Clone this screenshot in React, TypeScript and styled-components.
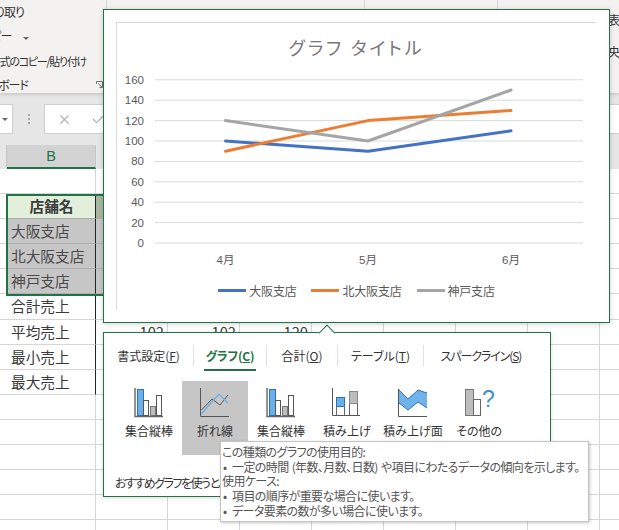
import React from 'react';
import styled, { createGlobalStyle } from 'styled-components';
import { X, Check } from 'lucide-react';

const GREEN = '#217346';
const JP = '"Noto Sans CJK JP", "Liberation Sans", sans-serif';

const GlobalStyle = createGlobalStyle`
  html, body {
    margin: 0;
    padding: 0;
    background: #fff;
  }
  body {
    font-family: ${JP};
    font-feature-settings: "palt";
    color: #444;
  }
`;

const Page = styled.div`
  position: relative;
  width: 619px;
  height: 530px;
  overflow: hidden;
  display: flex;
  flex-direction: column;
  background: #fff;
`;

/* ---- ribbon ---- */
const Ribbon = styled.div`
  height: 93px;
  flex: none;
  display: flex;
  background: #f3f2f1;
  box-shadow: 0 1px 4px rgba(0, 0, 0, 0.18);
  position: relative;
  z-index: 1;
`;

const ClipboardGroup = styled.div`
  position: relative;
  width: 106px;
  flex: none;
  border-right: 1px solid #d8d6d4;
  padding-top: 3px;
  overflow: hidden;
`;

const RibbonLine = styled.div<{ $indent: number; $tight?: boolean }>`
  height: 24.3px;
  line-height: 18px;
  font-size: ${(p) => (p.$tight ? 11 : 12)}px;
  letter-spacing: ${(p) => (p.$tight ? -1.3 : -1)}px;
  white-space: nowrap;
  color: #333;
  text-indent: ${(p) => p.$indent}px;
`;

const DropArrow = styled.span<{ $flush?: boolean }>`
  display: inline-block;
  width: 0;
  height: 0;
  margin-left: ${(p) => (p.$flush ? 0 : 12)}px;
  vertical-align: middle;
  border-left: 3px solid transparent;
  border-right: 3px solid transparent;
  border-top: 3px solid #666;
`;

const RibbonGroup = styled.div<{ $w: number }>`
  width: ${(p) => p.$w}px;
  flex: none;
  border-right: 1px solid #d8d6d4;
`;

const RibbonRest = styled.div`
  flex: 1;
  padding: 11px 0 0 110px;
  font-size: 12px;
  line-height: 18px;
  white-space: nowrap;
  overflow: hidden;
  color: #333;
  display: flex;
  flex-direction: column;
  gap: 14px;
`;

const Launcher = styled.svg`
  position: absolute;
  right: 3px;
  bottom: 5px;
`;

/* ---- formula bar ---- */
const FormulaBar = styled.div`
  height: 52px;
  flex: none;
  background: #e6e6e6;
  display: flex;
  align-items: flex-start;
  padding-top: 11px;
  box-sizing: border-box;
`;

const NameBox = styled.div`
  width: 13px;
  height: 30px;
  box-sizing: border-box;
  background: #fff;
  border: 1px solid #cfcfcf;
  border-left: none;
  display: flex;
  align-items: center;
  padding-left: 2px;
`;

const GripDots = styled.div`
  width: 2px;
  height: 10px;
  margin: 10px 14px 0 15px;
  background: repeating-linear-gradient(#a8a8a8 0 2px, transparent 2px 4px);
`;

const FormulaInput = styled.div`
  flex: 1;
  height: 30px;
  box-sizing: border-box;
  background: #fff;
  border: 1px solid #cfcfcf;
  border-right: none;
  display: flex;
  align-items: center;
  padding-left: 12px;
  gap: 19px;
  color: #b4b4b4;
`;

/* ---- sheet ---- */
const HeaderRow = styled.div`
  height: 24px;
  flex: none;
  display: grid;
  grid-template-columns: 7px 89px repeat(8, 72px);
  background: #e6e6e6;
`;

const ColHead = styled.div<{ $active?: boolean }>`
  box-sizing: border-box;
  border-right: 1px solid #c6c6c6;
  text-align: center;
  font: 14.5px/22px "Liberation Sans", sans-serif;
  color: ${GREEN};
  background: ${(p) => (p.$active ? '#d2d2d2' : 'transparent')};
  border-bottom: 2px solid ${(p) => (p.$active ? GREEN : '#e6e6e6')};
`;

const Sheet = styled.div`
  flex: 1;
  position: relative;
`;

const SheetRow = styled.div`
  height: 25.1px;
  display: grid;
  grid-template-columns: 7px 89px repeat(8, 72px);
`;

type Tone = 'head' | 'sel' | 'headSide';

const TONE_BG: Record<Tone, string> = {
  head: '#e2efda',
  sel: '#c6c6c6',
  headSide: '#a9b5a3',
};

const Cell = styled.div<{ $tone?: Tone; $edge?: boolean; $num?: boolean }>`
  box-sizing: border-box;
  border-right: 1px solid ${(p) => (p.$edge ? '#222' : p.$tone ? '#b0b0b0' : '#d6d6d6')};
  border-bottom: 1px solid ${(p) => (p.$tone ? '#afafaf' : '#d6d6d6')};
  background: ${(p) => (p.$tone ? TONE_BG[p.$tone] : '#fff')};
  font-size: 14.67px;
  line-height: 24px;
  padding: 0 3px 0 4px;
  color: ${(p) => (p.$tone === 'sel' ? '#4a4a4a' : '#3a3a3a')};
  font-weight: ${(p) => (p.$tone === 'head' ? 700 : 400)};
  text-align: ${(p) => (p.$tone === 'head' ? 'center' : p.$num ? 'right' : 'left')};
  font-feature-settings: normal;
  white-space: nowrap;
  overflow: hidden;
`;

const SelectionBox = styled.div`
  position: absolute;
  left: 6px;
  top: 25px;
  width: 110px;
  height: 102px;
  box-sizing: border-box;
  border: 2px solid ${GREEN};
`;

/* ---- chart popup ---- */
const ChartPopup = styled.div`
  position: absolute;
  left: 103px;
  top: 9px;
  width: 507px;
  height: 314px;
  box-sizing: border-box;
  background: #fff;
  border: 1px solid ${GREEN};
  box-shadow: 0 1px 5px rgba(0, 0, 0, 0.18);
  padding: 12px;
  z-index: 2;
`;

const ChartFrame = styled.div`
  width: 480px;
  height: 288px;
  box-sizing: border-box;
  border-top: 1px solid #d9d9d9;
  border-left: 1px solid #d9d9d9;
  display: flex;
  flex-direction: column;
`;

const ChartTitle = styled.div`
  margin-top: 13px;
  height: 22px;
  line-height: 22px;
  font-size: 18px;
  letter-spacing: 2.8px;
  text-align: center;
  color: #777;
`;

const Plot = styled.svg`
  display: block;
  margin-top: 12px;
  font-family: "Liberation Sans", ${JP};
  font-size: 11.5px;
  fill: #595959;
`;

const Legend = styled.div`
  margin-top: 10px;
  height: 20px;
  display: flex;
  justify-content: center;
  align-items: center;
  gap: 15px;
  font-size: 12px;
  letter-spacing: -0.2px;
  color: #595959;
`;

const LegendItem = styled.div`
  display: flex;
  align-items: center;
  gap: 3px;
`;

const LegendSwatch = styled.span<{ $color: string }>`
  width: 28px;
  height: 3px;
  background: ${(p) => p.$color};
`;

/* ---- quick analysis panel ---- */
const Panel = styled.div`
  position: absolute;
  left: 103px;
  top: 332px;
  width: 448px;
  height: 165px;
  box-sizing: border-box;
  background: #fff;
  border: 1px solid ${GREEN};
  box-shadow: 0 1px 4px rgba(0, 0, 0, 0.15);
  z-index: 2;
`;

const Notch = styled.div`
  position: absolute;
  left: 217px;
  top: -6px;
  width: 11px;
  height: 11px;
  background: #fff;
  border-top: 1px solid ${GREEN};
  border-left: 1px solid ${GREEN};
  transform: rotate(45deg);
`;

const TabStrip = styled.div`
  margin-top: 12px;
  height: 36px;
  display: grid;
  grid-template-columns: 90px 73px 71px 86px 114px;
  align-items: start;
`;

const Tab = styled.div<{ $last?: boolean }>`
  height: 21px;
  box-sizing: border-box;
  padding-top: 1px;
  line-height: 19px;
  font-size: 12px;
  letter-spacing: ${(p) => (p.$last ? '-1.1px' : '0')};
  text-align: center;
  color: #333;
  border-right: ${(p) => (p.$last ? 'none' : '1px solid #e1e1e1')};
`;

const ActiveTabLabel = styled.span`
  display: inline-block;
  padding: 0 2px 4px;
  border-bottom: 2px solid ${GREEN};
  color: ${GREEN};
  font-weight: 700;
  letter-spacing: -0.2px;
`;

const Key = styled.span`
  text-decoration: underline;
`;

const ToolRow = styled.div`
  display: flex;
  padding-left: 12px;
`;

const Tool = styled.div<{ $hot?: boolean }>`
  width: 66px;
  height: 74px;
  box-sizing: border-box;
  padding-top: 7px;
  display: flex;
  flex-direction: column;
  align-items: center;
  background: ${(p) => (p.$hot ? '#c6c6c6' : 'transparent')};
`;

const ToolLabel = styled.div`
  margin-top: 5px;
  font-size: 12px;
  line-height: 16px;
  color: #333;
  white-space: nowrap;
`;

const Hint = styled.div`
  margin-top: 20px;
  padding-left: 11px;
  font-size: 12px;
  line-height: 16px;
  letter-spacing: -1.5px;
  color: #333;
  white-space: nowrap;
`;

const Tooltip = styled.div`
  position: absolute;
  left: 220px;
  top: 441px;
  width: 369px;
  height: 81px;
  box-sizing: border-box;
  padding: 3px 0 0 1px;
  background: #fff;
  border: 1px solid #c4c4c4;
  box-shadow: 1px 1px 3px rgba(0, 0, 0, 0.22);
  font-size: 12px;
  line-height: 14.7px;
  letter-spacing: -0.6px;
  word-spacing: 1px;
  color: #555;
  white-space: nowrap;
  z-index: 3;
`;

const TipBullet = styled.div`
  &::before {
    content: '•';
    display: inline-block;
    width: 10px;
    padding-left: 1px;
    box-sizing: border-box;
  }
`;

/* ---- drawings ---- */
const Y_LABELS = [160, 140, 120, 100, 80, 60, 40, 20, 0];
const yOf = (v: number) => 173 - v * 1.02;
const MONTHS = [
  { label: '4月', x: 108.5 },
  { label: '5月', x: 251 },
  { label: '6月', x: 394 },
];
const SERIES = [
  { name: '大阪支店', color: '#4472c4', values: [100, 90, 110] },
  { name: '北大阪支店', color: '#ed7d31', values: [90, 120, 130] },
  { name: '神戸支店', color: '#a5a5a5', values: [120, 100, 150] },
];

const LineChart = () => (
  <Plot width="479" height="200" viewBox="0 0 479 200">
    {Y_LABELS.map((v) => (
      <g key={v}>
        <line x1="38" x2="466" y1={yOf(v)} y2={yOf(v)} stroke="#d9d9d9" strokeWidth="1" />
        <text x="27" y={yOf(v) + 4} textAnchor="end">{v}</text>
      </g>
    ))}
    {MONTHS.map((m) => (
      <text key={m.label} x={m.x} y="194" textAnchor="middle">{m.label}</text>
    ))}
    {SERIES.map((s) => (
      <polyline
        key={s.name}
        fill="none"
        stroke={s.color}
        strokeWidth="3"
        strokeLinecap="round"
        strokeLinejoin="round"
        points={s.values.map((v, i) => `${MONTHS[i].x},${yOf(v)}`).join(' ')}
      />
    ))}
  </Plot>
);

const ColumnIcon = () => (
  <svg width="30" height="30" viewBox="0 0 30 30">
    <rect x="3.5" y="1.5" width="6" height="26" fill="#69afe9" stroke="#2d72b5" />
    <rect x="9.5" y="12.5" width="5" height="15" fill="#fff" stroke="#555" />
    <rect x="16.5" y="18.5" width="5" height="9" fill="#bdbdbd" stroke="#777" />
    <rect x="22.5" y="7.5" width="5" height="20" fill="#fff" stroke="#555" />
    <path d="M1 0V28.5H29" fill="none" stroke="#666" strokeWidth="1.4" />
  </svg>
);

const LineIcon = () => (
  <svg width="30" height="30" viewBox="0 0 30 30">
    <path d="M1.5 22L12 11L20 17L28 7" fill="none" stroke="#555" strokeWidth="1" />
    <path d="M1.5 26L10 16L19 6L28 15" fill="none" stroke="#6aaee6" strokeWidth="1.2" />
    <path d="M0.5 0V28.5H29" fill="none" stroke="#555" />
  </svg>
);

const StackedIcon = () => (
  <svg width="30" height="30" viewBox="0 0 30 30">
    <rect x="4.5" y="18.5" width="8" height="9" fill="#fff" stroke="#666" />
    <rect x="4.5" y="9.5" width="8" height="9" fill="#69afe9" stroke="#2d72b5" />
    <rect x="17.5" y="15.5" width="8" height="12" fill="#fff" stroke="#666" />
    <rect x="17.5" y="3.5" width="8" height="12" fill="#bdbdbd" stroke="#888" />
    <path d="M0.5 0V27.5H28" fill="none" stroke="#555" />
  </svg>
);

const AreaIcon = () => (
  <svg width="30" height="30" viewBox="0 0 30 30">
    <path d="M1 2L10 11L20 2L29 5V20L20 14L10 22L1 15Z" fill="#6fb3ec" />
    <path d="M1 2L10 11L20 2L29 5M1 15L10 22L20 14L29 20" fill="none" stroke="#2d72b5" />
    <path d="M0.5 1V28.5H29" fill="none" stroke="#555" />
  </svg>
);

const MoreIcon = () => (
  <svg width="30" height="30" viewBox="0 0 30 30" style={{ overflow: 'visible' }}>
    <rect x="1.5" y="1.5" width="8" height="26" fill="#bdbdbd" stroke="#777" />
    <rect x="9.5" y="11.5" width="7" height="16" fill="#fff" stroke="#666" />
    <text x="18" y="19" fontSize="23" fill="#3f8fc9" fontFamily="Liberation Sans, sans-serif">?</text>
  </svg>
);

const TOOLS = [
  { label: '集合縦棒', icon: <ColumnIcon /> },
  { label: '折れ線', icon: <LineIcon />, hot: true },
  { label: '集合縦棒', icon: <ColumnIcon /> },
  { label: '積み上げ', icon: <StackedIcon /> },
  { label: '積み上げ面', icon: <AreaIcon /> },
  { label: 'その他の', icon: <MoreIcon /> },
];

const ROWS: { name: string; tone?: 'head' | 'sel'; nums?: string[] }[] = [
  { name: '' },
  { name: '店舗名', tone: 'head' },
  { name: '大阪支店', tone: 'sel' },
  { name: '北大阪支店', tone: 'sel' },
  { name: '神戸支店', tone: 'sel' },
  { name: '合計売上' },
  { name: '平均売上', nums: ['102', '102', '120'] },
  { name: '最小売上' },
  { name: '最大売上' },
  { name: '' },
  { name: '' },
  { name: '' },
  { name: '' },
  { name: '' },
  { name: '' },
];

const COLS = [0, 1, 2, 3, 4, 5, 6, 7];

const sideTone = (tone?: 'head' | 'sel'): Tone | undefined =>
  tone === 'head' ? 'headSide' : tone;

export default function App() {
  return (
    <Page>
      <GlobalStyle />
      <Ribbon>
        <ClipboardGroup>
          <RibbonLine $indent={-16}>切り取り</RibbonLine>
          <RibbonLine $indent={-20}>コピー<DropArrow /></RibbonLine>
          <RibbonLine $indent={-10} $tight>書式のコピー/貼り付け</RibbonLine>
          <RibbonLine $indent={-39}>クリップボード</RibbonLine>
          <Launcher width="7" height="7" viewBox="0 0 7 7">
            <path d="M0.5 3V0.5H6.5V6.5H3.5M2 2.5L6 6" fill="none" stroke="#777" />
          </Launcher>
        </ClipboardGroup>
        <RibbonGroup $w={257} />
        <RibbonGroup $w={132} />
        <RibbonRest>
          <span>表示</span>
          <span>央揃え</span>
        </RibbonRest>
      </Ribbon>

      <FormulaBar>
        <NameBox>
          <DropArrow $flush />
        </NameBox>
        <GripDots />
        <FormulaInput>
          <X size={15} strokeWidth={2} />
          <Check size={15} strokeWidth={2} />
        </FormulaInput>
      </FormulaBar>

      <HeaderRow>
        <ColHead />
        <ColHead $active>B</ColHead>
        {COLS.map((c) => (
          <ColHead key={c} />
        ))}
      </HeaderRow>

      <Sheet>
        {ROWS.map((row, r) => (
          <SheetRow key={r}>
            <Cell />
            <Cell $tone={row.tone} $edge={r > 0 && r < 9}>{row.name}</Cell>
            {COLS.map((c) => (
              <Cell key={c} $tone={c === 0 ? sideTone(row.tone) : undefined} $num>
                {row.nums && row.nums[c]}
              </Cell>
            ))}
          </SheetRow>
        ))}
        <SelectionBox />
      </Sheet>

      <ChartPopup>
        <ChartFrame>
          <ChartTitle>グラフ タイトル</ChartTitle>
          <LineChart />
          <Legend>
            {SERIES.map((s) => (
              <LegendItem key={s.name}>
                <LegendSwatch $color={s.color} />
                {s.name}
              </LegendItem>
            ))}
          </Legend>
        </ChartFrame>
      </ChartPopup>

      <Panel>
        <Notch />
        <TabStrip>
          <Tab>書式設定(<Key>F</Key>)</Tab>
          <Tab><ActiveTabLabel>グラフ(<Key>C</Key>)</ActiveTabLabel></Tab>
          <Tab>合計(<Key>O</Key>)</Tab>
          <Tab>テーブル(<Key>T</Key>)</Tab>
          <Tab $last>スパークライン(<Key>S</Key>)</Tab>
        </TabStrip>
        <ToolRow>
          {TOOLS.map((t, i) => (
            <Tool key={i} $hot={t.hot}>
              {t.icon}
              <ToolLabel>{t.label}</ToolLabel>
            </Tool>
          ))}
        </ToolRow>
        <Hint>おすすめグラフを使うと、</Hint>
      </Panel>

      <Tooltip>
        <div>この種類のグラフの使用目的:</div>
        <TipBullet>一定の時間 (年数、月数、日数) や項目にわたるデータの傾向を示します。</TipBullet>
        <div>使用ケース:</div>
        <TipBullet>項目の順序が重要な場合に使います。</TipBullet>
        <TipBullet>データ要素の数が多い場合に使います。</TipBullet>
      </Tooltip>
    </Page>
  );
}
